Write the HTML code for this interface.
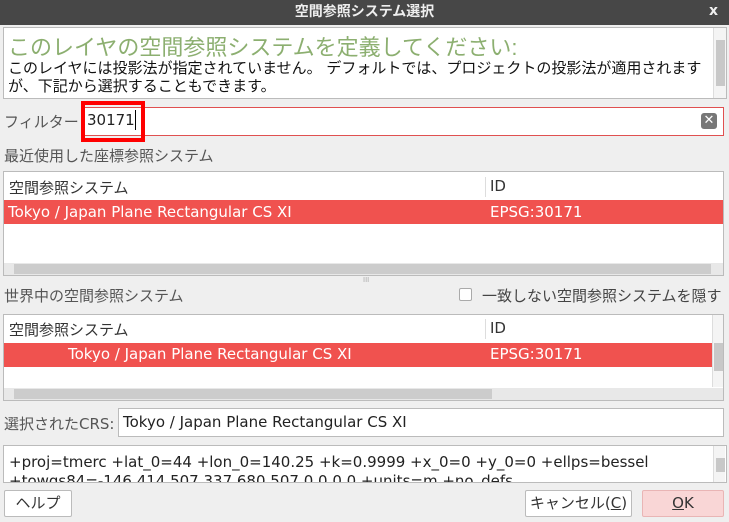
<!DOCTYPE html>
<html><head><meta charset="utf-8"><style>
*{box-sizing:border-box;margin:0;padding:0}
body{width:729px;height:522px;background:#efefef;font-family:"DejaVu Sans","Noto Sans CJK JP",sans-serif;font-size:15px;color:#333;position:relative;overflow:hidden}
.a{position:absolute;white-space:nowrap}
.box{position:absolute;background:#fff;border:1px solid #bbb}
.vs{position:absolute;background:#f4f4f4;border-left:1px solid #ddd}
.hs{position:absolute;background:#ccc}
</style></head><body>
<div class="a" style="left:0;top:0;width:729px;height:25px;background:#474747;color:#eee;font-weight:bold;font-size:14px;text-align:center;line-height:25px">空間参照システム選択</div>
<div class="a" style="left:709px;top:3px;color:#eee;font-weight:bold;font-size:14px">x</div>

<div class="box" style="left:3px;top:27px;width:724px;height:72px"></div>
<div class="vs" style="left:713px;top:28px;width:13px;height:70px"><div style="position:absolute;left:2px;top:12px;width:9px;height:46px;background:#c8c8c8"></div></div>
<div class="a" style="left:8px;top:30px;font-size:22px;color:#8caf70;font-family:'Liberation Sans','Noto Sans CJK JP',sans-serif">このレイヤの空間参照システムを定義してください:</div>
<div class="a" style="left:8px;top:57px;color:#111">このレイヤには投影法が指定されていません。 デフォルトでは、プロジェクトの投影法が適用されます</div>
<div class="a" style="left:8px;top:75px;color:#111">が、下記から選択することもできます。</div>

<div class="a" style="left:4px;top:111px;color:#555">フィルター</div>
<div class="box" style="left:82px;top:107px;width:642px;height:29px;border-color:#e05050"></div>
<div class="a" style="left:81px;top:101px;width:64px;height:41px;border:4px solid #f00"></div>
<div class="a" style="left:87px;top:111px;color:#222">30171</div>
<div class="a" style="left:135px;top:110px;width:1px;height:20px;background:#000"></div>
<div class="a" style="left:701px;top:113px;width:16px;height:16px;background:#777;border-radius:3px;color:#fff;font-size:13px;text-align:center;line-height:16px;font-weight:bold">✕</div>

<div class="a" style="left:4px;top:145px;color:#555">最近使用した座標参照システム</div>
<div class="box" style="left:3px;top:171px;width:721px;height:105px"></div>
<div class="a" style="left:9px;top:177px;color:#333">空間参照システム</div>
<div class="a" style="left:485px;top:177px;width:1px;height:20px;background:#ddd"></div>
<div class="a" style="left:490px;top:177px;color:#333">ID</div>
<div class="a" style="left:4px;top:200px;width:719px;height:24px;background:#f0524f"></div>
<div class="a" style="left:8px;top:203px;color:#fff">Tokyo / Japan Plane Rectangular CS XI</div>
<div class="a" style="left:490px;top:203px;color:#fff">EPSG:30171</div>
<div class="a" style="left:4px;top:263px;width:719px;height:12px;background:#e8e8e8"></div>
<div class="hs" style="left:14px;top:264px;width:697px;height:10px"></div>
<div class="a" style="left:363px;top:276px;font-size:7px;color:#aaa">III</div>

<div class="a" style="left:4px;top:285px;color:#555">世界中の空間参照システム</div>
<div class="a" style="left:459px;top:288px;width:13px;height:13px;border:1px solid #aaa;border-radius:2px;background:#fff"></div>
<div class="a" style="left:482px;top:285px;color:#444">一致しない空間参照システムを隠す</div>

<div class="box" style="left:3px;top:314px;width:721px;height:87px"></div>
<div class="a" style="left:9px;top:319px;color:#333">空間参照システム</div>
<div class="a" style="left:485px;top:319px;width:1px;height:20px;background:#ddd"></div>
<div class="a" style="left:490px;top:319px;color:#333">ID</div>
<div class="a" style="left:4px;top:343px;width:708px;height:24px;background:#f0524f"></div>
<div class="a" style="left:68px;top:345px;color:#fff">Tokyo / Japan Plane Rectangular CS XI</div>
<div class="a" style="left:490px;top:345px;color:#fff">EPSG:30171</div>
<div class="vs" style="left:712px;top:315px;width:11px;height:72px"><div style="position:absolute;left:1px;top:28px;width:9px;height:28px;background:#c8c8c8"></div></div>
<div class="a" style="left:4px;top:388px;width:719px;height:12px;background:#e8e8e8"></div>
<div class="hs" style="left:14px;top:389px;width:478px;height:10px"></div>

<div class="a" style="left:4px;top:413px;color:#555">選択されたCRS:</div>
<div class="box" style="left:118px;top:408px;width:606px;height:29px"></div>
<div class="a" style="left:123px;top:413px;color:#222">Tokyo / Japan Plane Rectangular CS XI</div>

<div class="box" style="left:3px;top:445px;width:724px;height:38px;overflow:hidden">
<div class="a" style="left:5px;top:7px;color:#222">+proj=tmerc +lat_0=44 +lon_0=140.25 +k=0.9999 +x_0=0 +y_0=0 +ellps=bessel</div>
<div class="a" style="left:5px;top:26px;color:#222">+towgs84=-146.414,507.337,680.507,0,0,0,0 +units=m +no_defs</div>
</div>
<div class="vs" style="left:713px;top:446px;width:12px;height:36px"><div style="position:absolute;left:2px;top:12px;width:9px;height:14px;background:#c8c8c8"></div></div>

<div class="box" style="left:4px;top:490px;width:68px;height:27px;border-radius:2px;text-align:center;line-height:25px;color:#333">ヘルプ</div>
<div class="box" style="left:525px;top:490px;width:107px;height:27px;border-radius:2px;text-align:center;line-height:25px;color:#333">キャンセル(<u>C</u>)</div>
<div class="box" style="left:642px;top:490px;width:82px;height:27px;border-radius:2px;text-align:center;line-height:25px;color:#333;background:#f9d6d6;border-color:#e9b5b5"><u>O</u>K</div>
</body></html>
